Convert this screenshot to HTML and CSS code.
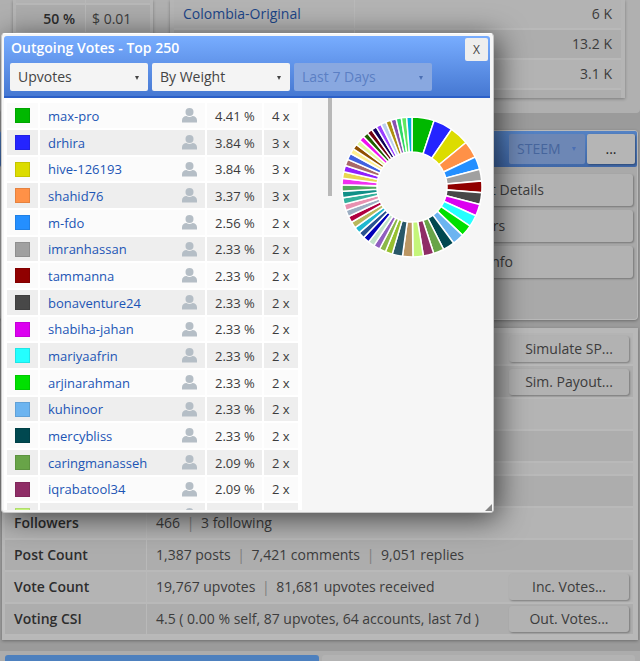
FILE: index.html
```html
<!DOCTYPE html>
<html lang="en">
<head>
<meta charset="utf-8">
<title>Account overview</title>
<link rel="stylesheet" href="styles.css">
</head>
<body>
<svg class="sprite" aria-hidden="true"><symbol id="user" viewBox="0 0 15 15"><circle cx="7.5" cy="4" r="4"/><path d="M0 14.5v-2.3C0 9.800 2 8 4.500 8c.9.700 1.900 1.100 3 1.100S9.600 8.700 10.500 8C13 8 15 9.800 15 12.200v2.300z"/></symbol></svg>
<main class="page">
  <section class="top">
    <div class="card price-card">
      <table class="price">
        <tbody>
          <tr><td></td><td></td></tr>
          <tr><th scope="row">50 %</th><td>$ 0.01</td></tr>
          <tr><td></td><td></td></tr>
          <tr><td></td><td></td></tr>
        </tbody>
      </table>
    </div>
    <div class="card tags-card">
      <table class="tags">
        <tbody>
          <tr><td><a href="#tag">Colombia-Original</a></td><td class="num">6 K</td></tr>
          <tr><td></td><td class="num">13.2 K</td></tr>
          <tr><td></td><td class="num">3.1 K</td></tr>
          <tr class="stub"><td></td><td></td></tr>
        </tbody>
      </table>
    </div>
  </section>

  <section class="account">
    <header class="bar">
      <span class="select coin"><select aria-label="Currency" disabled><option>STEEM</option></select></span>
      <button class="more" type="button">...</button>
    </header>
    <div class="actions">
      <button type="button">Account Details</button>
      <button type="button">Followers</button>
      <button type="button">Wallet Info</button>
    </div>
  </section>

  <section class="stats-card">
    <table class="stats">
      <tbody>
        <tr class="tall"><th></th><td><div class="cell"><span></span><button type="button">Simulate SP...</button></div></td></tr>
        <tr class="tall shade"><th></th><td><div class="cell"><span></span><button type="button">Sim. Payout...</button></div></td></tr>
        <tr><th></th><td></td></tr>
        <tr class="shade"><th></th><td></td></tr>
        <tr class="spacer"><td colspan="2"></td></tr>
        <tr class="shade"><th></th><td></td></tr>
        <tr><th scope="row">Followers</th><td>466 <i>|</i> 3 following</td></tr>
        <tr class="shade"><th scope="row">Post Count</th><td>1,387 posts <i>|</i> 7,421 comments <i>|</i> 9,051 replies</td></tr>
        <tr><th scope="row">Vote Count</th><td><div class="cell"><span>19,767 upvotes <i>|</i> 81,681 upvotes received</span><button type="button">Inc. Votes...</button></div></td></tr>
        <tr class="shade"><th scope="row">Voting CSI</th><td><div class="cell"><span>4.5 ( 0.00 % self, 87 upvotes, 64 accounts, last 7d )</span><button type="button">Out. Votes...</button></div></td></tr>
      </tbody>
    </table>
  </section>

  <section class="tabs"><div class="tab active"></div><div class="tab"></div></section>
</main>

<div class="dialog" role="dialog" aria-labelledby="dialog-title">
  <header class="dialog-head">
    <div class="title-row">
      <h1 id="dialog-title">Outgoing Votes - Top 250</h1>
      <button class="close" type="button">X</button>
    </div>
    <div class="filters">
      <span class="select"><select aria-label="Vote type"><option>Upvotes</option></select></span>
      <span class="select"><select aria-label="Order"><option>By Weight</option></select></span>
      <span class="select"><select aria-label="Period" disabled><option>Last 7 Days</option></select></span>
    </div>
  </header>
  <div class="dialog-body">
    <div class="list">
      <table class="votes"><tbody id="votes"></tbody></table>
    </div>
    <div class="track"><div class="thumb"></div></div>
    <svg id="chart" class="chart" viewBox="-71 -71 142 142" role="img" aria-label="Votes by weight"></svg>
  </div>
  <svg class="grip" viewBox="0 0 7 7" aria-hidden="true"><path d="M7 0v7H0z"/></svg>
</div>
<script src="votes.js"></script>
</body>
</html>
```
FILE: styles.css
```css
* { box-sizing: border-box; }
html, body { height: 100%; }
body {
  margin: 0;
  overflow: hidden;
  background: #9b9b9b;
  color: #3c3c3c;
  font: 14px/20px "Open Sans", "Noto Sans", sans-serif;
}
button, select { font: inherit; color: inherit; }
a { color: #1c4587; text-decoration: none; }
table { border-collapse: separate; border-spacing: 0; }
td, th { padding: 0; text-align: left; }
.sprite { position: absolute; width: 0; height: 0; }

.page { display: flex; flex-direction: column; }
.top { display: flex; height: 113px; padding: 0 2px; background: #b0b0b0; border-radius: 0 0 4px 4px; }
.card { background: #b5b5b5; box-shadow: 0 1px 3px rgba(0,0,0,.3); height: 98px; overflow: hidden; }
.price-card { width: 140px; margin-left: 11px; padding: 0 3px; }
.price { width: 100%; table-layout: fixed; }
.price td, .price th { height: 29px; border-bottom: 2px solid #b8b8b8; background: #acacac; }
.price tr:first-child td { height: 5px; background: #b2b2b2; }
.price td:first-child, .price th { width: 70px; border-right: 1px solid #b8b8b8; padding-right: 10px; text-align: right; }
.price td:last-child { padding-left: 6px; }
.price th { color: #2d2d2d; font-weight: 600; }
.tags-card { flex: 1; margin: 0 13px 0 17px; padding: 0 4px; }
.tags { width: 100%; table-layout: fixed; }
.tags td { height: 30px; border-bottom: 2px solid #b9b9b9; padding: 0 9px; background: #b3b3b3; }
.tags td:first-child { width: 181px; border-right: 1px solid #b9b9b9; }
.tags tr:nth-child(even) td { background: #adadad; }
.tags .num { text-align: right; }

.account { margin: 17px 2px 0 0; border: 1px solid #b9b9b9; border-left: 0; border-radius: 4px; background: #a9a9a9; box-shadow: 0 1px 3px rgba(0,0,0,.3); height: 190px; }
.bar { display: flex; justify-content: flex-end; gap: 2px; height: 36px; padding: 3px 2px; background: linear-gradient(#5482c4, #4068a8); border-radius: 2px; }
.coin { width: 76px; }
.more { width: 48px; border: 0; border-radius: 2px; background: #b5b5b5; color: #222; box-shadow: 1px 1px 2px rgba(0,0,0,.3); padding: 0; }
.actions { display: flex; flex-direction: column; align-items: flex-end; gap: 4px; padding: 7px 4px; }
.actions button { width: 220px; height: 32px; padding: 0 0 0 30px; text-align: left; }
.actions button, .cell button { border: 0; border-radius: 3px; background: #b2b2b2; box-shadow: 1px 1px 2px rgba(0,0,0,.3); }

.stats-card { margin: 8px 2px 0; padding: 5px 5px 4px 3px; background: #b8b8b8; box-shadow: 0 1px 3px rgba(0,0,0,.3); }
.stats { width: 100%; table-layout: fixed; }
.stats th, .stats td { height: 32px; border-bottom: 2px solid #b9b9b9; background: #b4b4b4; }
.stats th { width: 142px; padding-left: 9px; border-right: 1px solid #b9b9b9; color: #2d2d2d; font-weight: 600; }
.stats td { padding: 0 4px 0 9px; }
.stats .tall td { height: 33px; }
.stats .shade th, .stats .shade td { background: #adadad; }
.stats .spacer td { height: 13px; }
.stats i { font-style: normal; color: #7d7d7d; padding: 0 3px; }
.cell { display: flex; justify-content: space-between; align-items: center; }
.cell button { width: 120px; height: 26px; padding: 0; }
.tabs { display: flex; gap: 3px; height: 32px; margin-top: 11px; padding: 4px 5px 0; background: #acacac; }
.tab { flex: 1; border-radius: 3px 3px 0 0; background: #b3b3b3; }
.active { background: #4d80be; }

.select { position: relative; display: block; height: 28px; }
.select select { width: 100%; height: 100%; appearance: none; border: 0; border-radius: 2px; padding: 0 8px; background: #f4f4f4; color: #444; opacity: 1; }
.select::after { content: ""; position: absolute; right: 9px; top: 13px; border: solid transparent; border-width: 4px 2px 0; border-top-color: #444; pointer-events: none; }
.select select:disabled { background: #89a8e0; color: #5b7fc4; }
.select:has(:disabled)::after { border-top-color: #4b6fb4; }
.coin { height: 30px; }
.coin select:disabled { background: #6d87b5; color: #46659c; }

.dialog {
  position: absolute; left: 1px; top: 33px; width: 493px; height: 480px;
  display: flex; flex-direction: column;
  padding: 2px; border: 1px solid #c8c8c8; border-top-color: #fff; border-radius: 4px;
  background: #f6f6f6; box-shadow: 4px 5px 30px rgba(0,0,0,.65);
}
.dialog-head { flex: none; height: 62px; margin-right: 1px; padding: 2px 2px 0 6px; border-bottom: 2px solid #2c60c8; border-radius: 3px 3px 0 0; background: linear-gradient(#78adff, #4678d2); }
.title-row { display: flex; justify-content: space-between; height: 25px; }
.dialog h1 { margin: 0; padding-left: 1px; color: #fff; font-size: 14px; line-height: 20px; font-weight: 600; }
.close { width: 23px; height: 23px; border: 0; border-radius: 2px; background: #eee; color: #444; font-size: 12px; padding: 0; }
.filters { display: flex; gap: 4px; }
.filters .select { width: 138px; }
.dialog-body { display: flex; align-items: flex-start; flex: 1; min-height: 0; overflow: hidden; }
.list { width: 298px; height: 100%; overflow: hidden; padding: 3px 1px 0 1px; background: #fff; font-size: 13px; }
.votes { border-spacing: 2px; table-layout: fixed; width: 295px; }
.votes td { height: 25px; background: #fbfbfb; line-height: 20px; white-space: nowrap; }
.votes tr:nth-child(3n) td { height: 24px; }
.votes tr:nth-child(even) td { background: #eee; }
.votes td:nth-child(1) { width: 31px; }
.votes td:nth-child(3) { width: 55px; padding-left: 8px; }
.votes td:nth-child(4) { width: 34px; padding-left: 8px; }
.swatch { display: block; width: 15px; height: 15px; margin: 0 8px; border: 1px solid rgba(0,0,0,.1); }
.voter { display: flex; justify-content: space-between; align-items: center; padding: 0 8px; }
.voter a { color: #1c55b5; }
.voter svg { width: 15px; height: 15px; fill: #b5bec6; }
.track { width: 31px; }
.thumb { width: 4px; height: 98px; margin-left: 26px; background: #b8b8b8; }
.chart { width: 142px; height: 142px; margin: 18px 0 0 8px; }
.grip { position: absolute; right: 1px; bottom: 1px; width: 7px; height: 7px; fill: #858585; }
```
FILE: votes.js
```js
const votes = [
  ["max-pro", "4.41", 4, "#00b800"], ["drhira", "3.84", 3, "#2424ff"],
  ["hive-126193", "3.84", 3, "#dcdc00"], ["shahid76", "3.37", 3, "#ff9147"],
  ["m-fdo", "2.56", 2, "#248fff"], ["imranhassan", "2.33", 2, "#a0a0a0"],
  ["tammanna", "2.33", 2, "#900000"], ["bonaventure24", "2.33", 2, "#484848"],
  ["shabiha-jahan", "2.33", 2, "#dc00f0"], ["mariyaafrin", "2.33", 2, "#24ffff"],
  ["arjinarahman", "2.33", 2, "#00e000"], ["kuhinoor", "2.33", 2, "#6cb4f0"],
  ["mercybliss", "2.33", 2, "#004850"], ["caringmanasseh", "2.09", 2, "#68a448"],
  ["iqrabatool34", "2.09", 2, "#8f2d66"], ["", "", "", "#c4f57a"]
];
document.getElementById("votes").innerHTML = votes.map(([name, weight, count, color]) =>
  `<tr><td><span class="swatch" style="background:${color}"></span></td>` +
  `<td><div class="voter"><a href="#voter">${name}</a><svg aria-hidden="true"><use href="#user"/></svg></div></td>` +
  `<td>${weight && weight + " %"}</td><td>${count && count + " x"}</td></tr>`).join("");

// Slices after the listed voters: weight and colours, in chart order.
const rest = [
  [2.06, "#c4f57a #bc9764 #285768"], [1.41, "#98c030"],
  [1.28, "#8cb84a #9060c0 #c0e2c8 #0000b8 #2a5290 #20b8d0 #b8b85c #b00040 #9caec2 #e890b0 #34b09c #109088 #50a85c #f030f0 #e8d850 #9020ff #a86868 #4060e0"],
  [1.05, "#fff090 #905000 #e2f8a0 #f010f0 #206000 #700010 #100058 #9a40ff #bcd0ec #ae9010 #8850b0 #30d868 #60e860 #00b0d8"]
];
const slices = votes.slice(0, 15).map(v => [Number(v[1]), v[3]]);
rest.forEach(([weight, colors]) => colors.split(" ").forEach(c => slices.push([weight, c])));
const total = slices.reduce((sum, s) => sum + s[0], 0);
const at = (r, a) => `${(r * Math.sin(a)).toFixed(2)} ${(-r * Math.cos(a)).toFixed(2)}`;
let angle = 0;
document.getElementById("chart").innerHTML = slices.map(([weight, color]) => {
  const from = angle;
  angle += weight / total * 2 * Math.PI;
  return `<path fill="${color}" stroke="#fff" stroke-width="1.5" d="M${at(70, from)}A70 70 0 0 1 ${at(70, angle)}L${at(35, angle)}A35 35 0 0 0 ${at(35, from)}z"/>`;
}).join("");
```
